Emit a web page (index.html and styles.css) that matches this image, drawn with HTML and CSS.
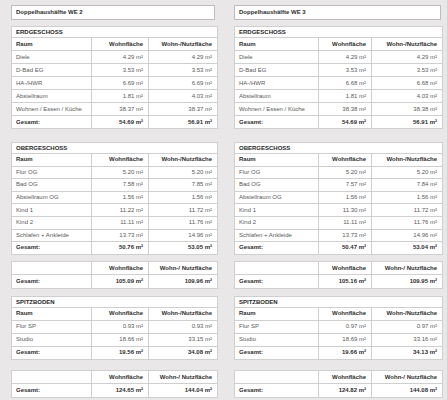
FILE: index.html
```html
<!DOCTYPE html>
<html lang="de">
<head>
<meta charset="utf-8">
<title>Wohnflächen</title>
<link rel="stylesheet" href="styles.css">
</head>
<body>
<div class="page">
  <div class="col col-left">
    <div class="title">Doppelhaushälfte WE 2</div>
    <table class="tbl gap-13">
      <colgroup><col class="c1"><col class="c2"><col class="c3"></colgroup>
      <tr class="sec"><td colspan="3">ERDGESCHOSS</td></tr>
      <tr class="hd"><td>Raum</td><td class="n">Wohnfläche</td><td class="n">Wohn-/Nutzfläche</td></tr>
      <tr><td>Diele</td><td class="n">4.29 m²</td><td class="n">4.29 m²</td></tr>
      <tr><td>D-Bad EG</td><td class="n">3.53 m²</td><td class="n">3.53 m²</td></tr>
      <tr><td>HA-/HWR</td><td class="n">6.69 m²</td><td class="n">6.69 m²</td></tr>
      <tr><td>Abstellraum</td><td class="n">1.81 m²</td><td class="n">4.03 m²</td></tr>
      <tr><td>Wohnen / Essen / Küche</td><td class="n">38.37 m²</td><td class="n">38.37 m²</td></tr>
      <tr class="tot"><td>Gesamt:</td><td class="n">54.69 m²</td><td class="n">56.91 m²</td></tr>
    </table>
    <table class="tbl og gap-6">
      <colgroup><col class="c1"><col class="c2"><col class="c3"></colgroup>
      <tr class="sec"><td colspan="3">OBERGESCHOSS</td></tr>
      <tr class="hd"><td>Raum</td><td class="n">Wohnfläche</td><td class="n">Wohn-/Nutzfläche</td></tr>
      <tr><td>Flur OG</td><td class="n">5.20 m²</td><td class="n">5.20 m²</td></tr>
      <tr><td>Bad OG</td><td class="n">7.58 m²</td><td class="n">7.85 m²</td></tr>
      <tr><td>Abstellraum OG</td><td class="n">1.56 m²</td><td class="n">1.56 m²</td></tr>
      <tr><td>Kind 1</td><td class="n">11.22 m²</td><td class="n">11.72 m²</td></tr>
      <tr><td>Kind 2</td><td class="n">11.11 m²</td><td class="n">11.76 m²</td></tr>
      <tr><td>Schlafen + Ankleide</td><td class="n">13.73 m²</td><td class="n">14.96 m²</td></tr>
      <tr class="tot"><td>Gesamt:</td><td class="n">50.76 m²</td><td class="n">53.05 m²</td></tr>
    </table>
    <table class="tbl sum gap-7">
      <colgroup><col class="c1"><col class="c2"><col class="c3"></colgroup>
      <tr class="hd"><td></td><td class="n">Wohnfläche</td><td class="n">Wohn-/ Nutzfläche</td></tr>
      <tr class="tot"><td>Gesamt:</td><td class="n">105.09 m²</td><td class="n">109.96 m²</td></tr>
    </table>
    <table class="tbl gap-10">
      <colgroup><col class="c1"><col class="c2"><col class="c3"></colgroup>
      <tr class="sec"><td colspan="3">SPITZBODEN</td></tr>
      <tr class="hd"><td>Raum</td><td class="n">Wohnfläche</td><td class="n">Wohn-/Nutzfläche</td></tr>
      <tr><td>Flur SP</td><td class="n">0.93 m²</td><td class="n">0.93 m²</td></tr>
      <tr><td>Studio</td><td class="n">18.66 m²</td><td class="n">33.15 m²</td></tr>
      <tr class="tot"><td>Gesamt:</td><td class="n">19.56 m²</td><td class="n">34.08 m²</td></tr>
    </table>
    <table class="tbl sum">
      <colgroup><col class="c1"><col class="c2"><col class="c3"></colgroup>
      <tr class="hd"><td></td><td class="n">Wohnfläche</td><td class="n">Wohn-/ Nutzfläche</td></tr>
      <tr class="tot"><td>Gesamt:</td><td class="n">124.65 m²</td><td class="n">144.04 m²</td></tr>
    </table>
  </div>

  <div class="col col-right">
    <div class="title">Doppelhaushälfte WE 3</div>
    <table class="tbl gap-13">
      <colgroup><col class="c1"><col class="c2"><col class="c3"></colgroup>
      <tr class="sec"><td colspan="3">ERDGESCHOSS</td></tr>
      <tr class="hd"><td>Raum</td><td class="n">Wohnfläche</td><td class="n">Wohn-/Nutzfläche</td></tr>
      <tr><td>Diele</td><td class="n">4.29 m²</td><td class="n">4.29 m²</td></tr>
      <tr><td>D-Bad EG</td><td class="n">3.53 m²</td><td class="n">3.53 m²</td></tr>
      <tr><td>HA-/HWR</td><td class="n">6.68 m²</td><td class="n">6.68 m²</td></tr>
      <tr><td>Abstellraum</td><td class="n">1.81 m²</td><td class="n">4.03 m²</td></tr>
      <tr><td>Wohnen / Essen / Küche</td><td class="n">38.38 m²</td><td class="n">38.38 m²</td></tr>
      <tr class="tot"><td>Gesamt:</td><td class="n">54.69 m²</td><td class="n">56.91 m²</td></tr>
    </table>
    <table class="tbl og gap-6">
      <colgroup><col class="c1"><col class="c2"><col class="c3"></colgroup>
      <tr class="sec"><td colspan="3">OBERGESCHOSS</td></tr>
      <tr class="hd"><td>Raum</td><td class="n">Wohnfläche</td><td class="n">Wohn-/Nutzfläche</td></tr>
      <tr><td>Flur OG</td><td class="n">5.20 m²</td><td class="n">5.20 m²</td></tr>
      <tr><td>Bad OG</td><td class="n">7.57 m²</td><td class="n">7.84 m²</td></tr>
      <tr><td>Abstellraum OG</td><td class="n">1.56 m²</td><td class="n">1.56 m²</td></tr>
      <tr><td>Kind 1</td><td class="n">11.30 m²</td><td class="n">11.72 m²</td></tr>
      <tr><td>Kind 2</td><td class="n">11.11 m²</td><td class="n">11.76 m²</td></tr>
      <tr><td>Schlafen + Ankleide</td><td class="n">13.73 m²</td><td class="n">14.96 m²</td></tr>
      <tr class="tot"><td>Gesamt:</td><td class="n">50.47 m²</td><td class="n">53.04 m²</td></tr>
    </table>
    <table class="tbl sum gap-7">
      <colgroup><col class="c1"><col class="c2"><col class="c3"></colgroup>
      <tr class="hd"><td></td><td class="n">Wohnfläche</td><td class="n">Wohn-/ Nutzfläche</td></tr>
      <tr class="tot"><td>Gesamt:</td><td class="n">105.16 m²</td><td class="n">109.95 m²</td></tr>
    </table>
    <table class="tbl gap-10">
      <colgroup><col class="c1"><col class="c2"><col class="c3"></colgroup>
      <tr class="sec"><td colspan="3">SPITZBODEN</td></tr>
      <tr class="hd"><td>Raum</td><td class="n">Wohnfläche</td><td class="n">Wohn-/Nutzfläche</td></tr>
      <tr><td>Flur SP</td><td class="n">0.97 m²</td><td class="n">0.97 m²</td></tr>
      <tr><td>Studio</td><td class="n">18.69 m²</td><td class="n">33.16 m²</td></tr>
      <tr class="tot"><td>Gesamt:</td><td class="n">19.66 m²</td><td class="n">34.13 m²</td></tr>
    </table>
    <table class="tbl sum">
      <colgroup><col class="c1"><col class="c2"><col class="c3"></colgroup>
      <tr class="hd"><td></td><td class="n">Wohnfläche</td><td class="n">Wohn-/ Nutzfläche</td></tr>
      <tr class="tot"><td>Gesamt:</td><td class="n">124.82 m²</td><td class="n">144.08 m²</td></tr>
    </table>
  </div>
</div>
</body>
</html>
```
FILE: styles.css
```css
html, body {
  margin: 0;
  padding: 0;
  background: #e9e7e7;
}
body {
  font-family: "Liberation Sans", Arial, sans-serif;
  font-size: 6px;
  color: #5a5a5a;
}
.page {
  display: flex;
  gap: 16px;
  padding: 5px 0 0 11px;
}
.col {
  display: flex;
  flex-direction: column;
}
.col-left { width: 207px; }
.col-right { width: 209px; }

.title {
  box-sizing: border-box;
  height: 15px;
  line-height: 13px;
  padding-left: 4px;
  background: #fff;
  border: 1px solid #bdbdbd;
  font-weight: bold;
  color: #2e2e2e;
  margin-bottom: 6px;
  width: 204px;
}
.col-right .title { width: 207px; }

.tbl {
  width: 100%;
  table-layout: fixed;
  border-collapse: collapse;
  background: #fff;
  border: 1px solid #b8b8b8;
}
.col-left .c1 { width: 80px; }
.col-left .c2 { width: 57px; }
.col-right .c1 { width: 84px; }
.col-right .c2 { width: 53px; }

.tbl tr { height: 13px; }
.tbl tr.sec { height: 11px; }
.tbl.og tr { height: 12.6px; }
.tbl.og tr.sec { height: 11px; }
.tbl.sum tr { height: 13.5px; }

.tbl td {
  padding: 0 4px;
  border: 1px solid #cfcfcf;
  line-height: 9px;
  white-space: nowrap;
  overflow: hidden;
}
.tbl td.n {
  text-align: right;
  padding-right: 5px;
}
.tbl tr.sec td {
  line-height: 8px;
  font-weight: bold;
  color: #262626;
}
.tbl tr.hd td,
.tbl tr.tot td {
  font-weight: bold;
  color: #2e2e2e;
}

.gap-6 { margin-bottom: 6px; }
.gap-7 { margin-bottom: 7px; }
.gap-10 { margin-bottom: 10px; }
.gap-13 { margin-bottom: 13px; }
```
